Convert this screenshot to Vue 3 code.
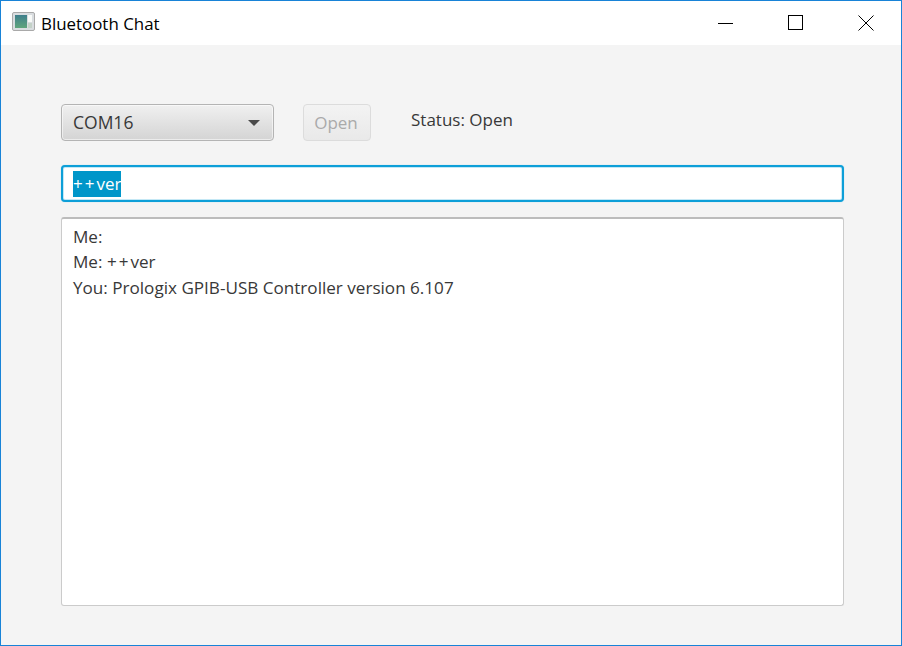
<script setup>
const lines = [
  { id: 1, parts: [{ t: 'Me:' }] },
  { id: 2, parts: [{ t: 'Me: ' }, { t: '++', wide: true }, { t: 'ver' }] },
  { id: 3, parts: [{ t: 'You: Prologix GPIB-USB Controller version 6.107' }] }
]
</script>

<template>
  <div class="window">
    <header class="titlebar">
      <svg class="app-icon" width="23" height="20" viewBox="0 0 23 20">
        <defs>
          <linearGradient id="pane" x1="0" y1="0" x2="0" y2="1">
            <stop offset="0" stop-color="#3f7f8c" />
            <stop offset="1" stop-color="#5fa57c" />
          </linearGradient>
        </defs>
        <rect x="0.5" y="0.5" width="22" height="18" rx="1.5" fill="#d9dde0" stroke="#a9a9a9" />
        <rect x="3" y="3" width="12" height="13" fill="url(#pane)" />
        <rect x="16" y="3" width="4" height="7" fill="#f8faf8" />
        <rect x="16" y="11" width="4" height="5" fill="#c4d2c8" />
      </svg>
      <span class="title">Bluetooth Chat</span>
      <div class="controls">
        <button class="ctl">
          <svg width="16" height="16" viewBox="0 0 16 16"><path d="M0 8.5H15" stroke="#000" fill="none" /></svg>
        </button>
        <button class="ctl">
          <svg width="16" height="16" viewBox="0 0 16 16"><rect x="0.5" y="0.5" width="14" height="14" stroke="#000" fill="none" /></svg>
        </button>
        <button class="ctl">
          <svg width="16" height="16" viewBox="0 0 16 16"><path d="M0.5 0.5L15.5 15.5M15.5 0.5L0.5 15.5" stroke="#000" fill="none" /></svg>
        </button>
      </div>
    </header>

    <main class="content">
      <div class="toolbar">
        <div class="combo">
          <span class="combo-text">COM16</span>
          <i class="arrow"></i>
        </div>
        <div class="open-btn"><span>Open</span></div>
        <div class="status">Status: Open</div>
      </div>
      <div class="input"><span class="selected"><span class="wide">++</span>ver</span></div>
      <div class="log">
        <div v-for="line in lines" :key="line.id" class="line"><span v-for="(p, i) in line.parts" :key="i" :class="{ wide: p.wide }">{{ p.t }}</span></div>
      </div>
    </main>
  </div>
</template>

<style>
html, body { margin: 0; padding: 0; background: #f4f4f4; }
</style>

<style scoped>
.window {
  width: 902px;
  height: 646px;
  box-sizing: border-box;
  border: 1px solid #1883d7;
  display: flex;
  flex-direction: column;
  background: #f4f4f4;
  font-family: "Open Sans", "Noto Sans", sans-serif;
  color: #383838;
  overflow: hidden;
}
.titlebar {
  height: 44px;
  flex: none;
  background: #fff;
  display: flex;
  align-items: center;
  padding-left: 11px;
  color: #000;
}
.app-icon { margin-right: 6px; flex: none; margin-top: -2px; }
.title { font-size: 16.9px; }
.controls { margin-left: auto; display: flex; height: 100%; }
.ctl {
  width: 70px;
  border: 0;
  padding: 0;
  background: transparent;
  display: flex;
  align-items: center;
  justify-content: center;
  margin-top: -1px;
}
.content {
  flex: 1;
  padding: 59px 57px 39px 60px;
  display: flex;
  flex-direction: column;
  min-height: 0;
}
.toolbar {
  display: flex;
  align-items: flex-start;
  height: 37px;
  flex: none;
}
.combo {
  width: 213px;
  height: 37px;
  box-sizing: border-box;
  border: 1px solid #b4b4b4;
  border-radius: 4px;
  background: linear-gradient(#f0f0f0, #d4d4d4);
  box-shadow: inset 0 0 0 1px rgba(255, 255, 255, 0.55);
  display: flex;
  align-items: center;
  justify-content: space-between;
  padding: 0 13px 2px 11px;
  font-size: 17.5px;
}
.arrow {
  width: 0;
  height: 0;
  margin-top: 2px;
  border-left: 6px solid transparent;
  border-right: 6px solid transparent;
  border-top: 6px solid #4a4a4a;
}
.open-btn {
  width: 68px;
  height: 37px;
  box-sizing: border-box;
  margin-left: 29px;
  padding-bottom: 1px;
  padding-right: 2px;
  border: 1px solid #dcdcdc;
  border-radius: 4px;
  background: linear-gradient(#f3f3f3, #e9e9e9);
  color: #aaa;
  font-size: 17px;
  display: flex;
  align-items: center;
  justify-content: center;
}
.status {
  margin-left: 40px;
  font-size: 17px;
  line-height: 31px;
}
.input {
  margin-top: 24px;
  height: 37px;
  flex: none;
  box-sizing: border-box;
  border: 2px solid #0d9fd8;
  border-radius: 4px;
  background: #fff;
  box-shadow: inset 0 0 0 1px #c4e8f5, 0 0 1px #7fcbe8;
  padding: 0 10px;
  font-size: 17px;
  display: flex;
  align-items: center;
}
.selected {
  background: #0096c9;
  color: #fff;
  line-height: 26px;
}
.wide { letter-spacing: 2px; }
.log {
  margin-top: 15px;
  flex: 1;
  min-height: 0;
  box-sizing: border-box;
  background: #fff;
  border: 1px solid #cbcbcb;
  border-top: 2px solid #bcbcbc;
  border-radius: 3px;
  padding: 5px 11px;
  font-size: 17.1px;
  line-height: 25.4px;
}
.line { white-space: pre; }
</style>
